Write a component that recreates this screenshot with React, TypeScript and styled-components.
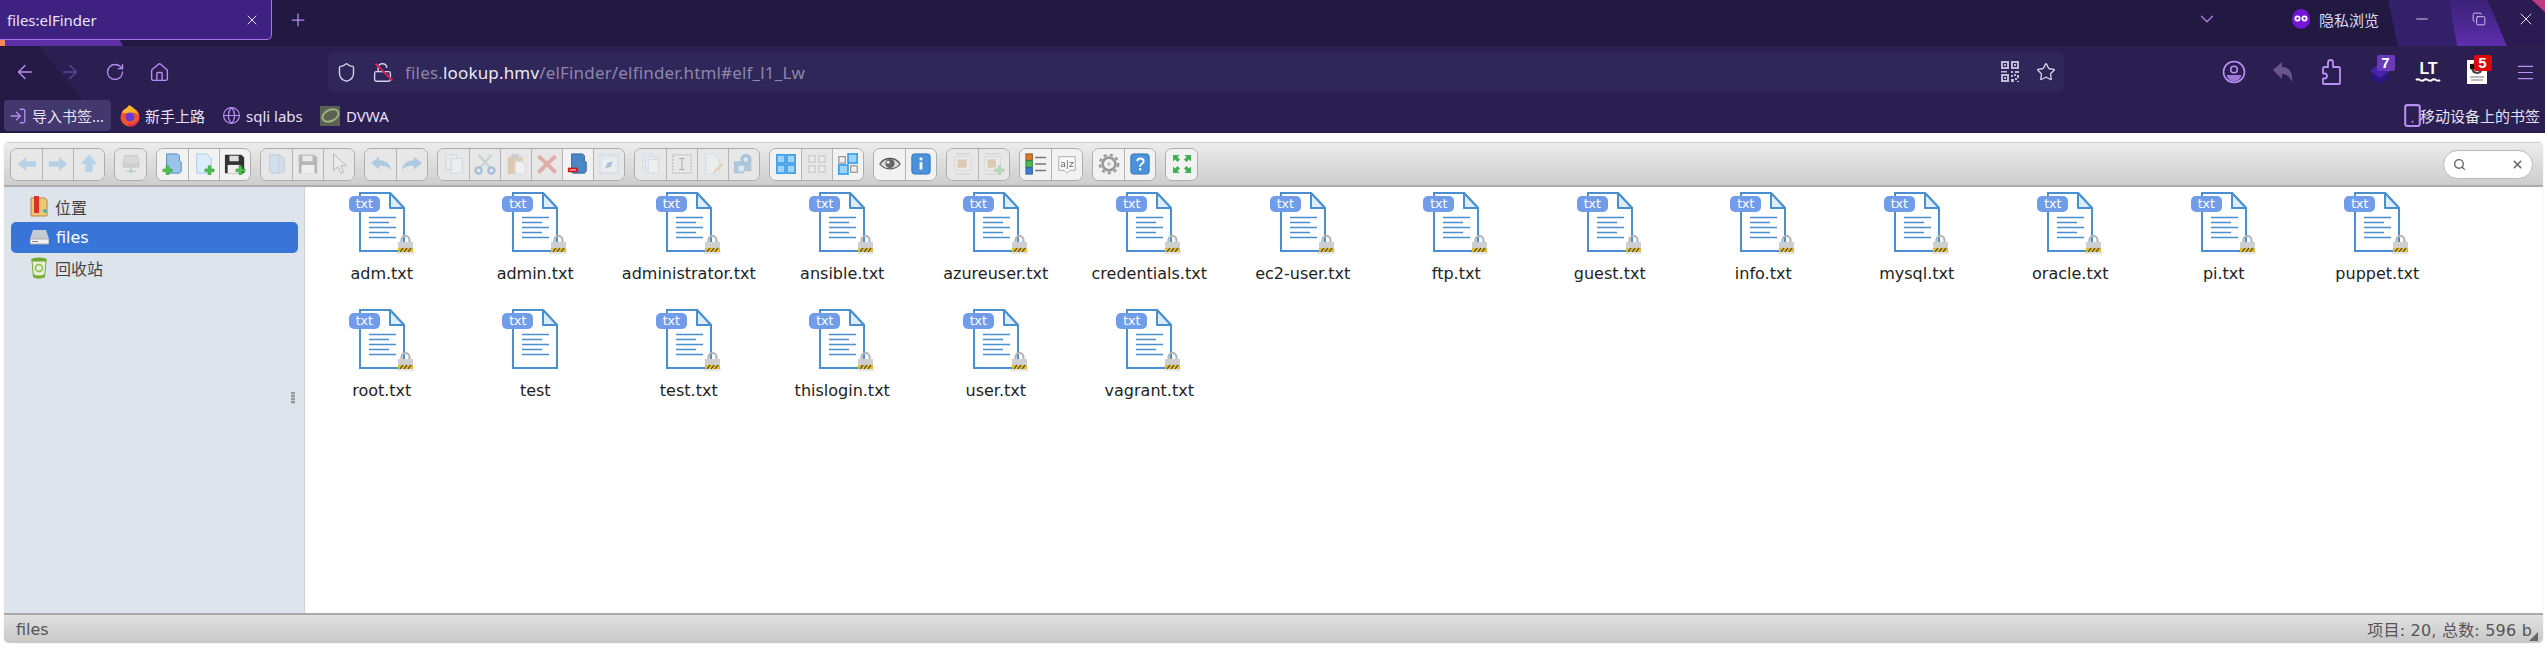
import React from "react";
import styled, { createGlobalStyle } from "styled-components";
import { ArrowLeft, ArrowRight, RotateCw, Home, Shield, Star, X, Plus, ChevronDown, Menu, Globe, Minus, Copy, LockOpen, Smartphone, LogIn, Search } from "lucide-react";

const CJK = `"Noto Sans", "Noto Sans CJK SC", sans-serif`;
const FM = `"DejaVu Sans", "Noto Sans CJK SC", sans-serif`;

const Global = createGlobalStyle`
  html, body { margin: 0; padding: 0; background: #fff; }
  #root { width: 2545px; height: 664px; overflow: hidden; }
`;

const Page = styled.div`width: 2545px; height: 664px; display: flex; flex-direction: column; background: #fff;`;
const Chrome = styled.header`
  position: relative; height: 133px; flex: none; background: #2a1f50; overflow: hidden; color: #e6e0f5; font-family: ${CJK};
`;
const Art = styled.svg`position: absolute; left: 0; top: 0; width: 2545px; height: 133px;`;
const TabRow = styled.div`position: relative; height: 46px; display: flex; align-items: flex-start;`;
const Tab = styled.div`
  width: 272px; height: 40px; box-sizing: border-box; background: #3e2180;
  border-right: 1px solid #a774ee; border-bottom: 1px solid #a774ee; border-bottom-right-radius: 5px;
  display: flex; align-items: center; justify-content: space-between; padding: 0 11px 0 7px; font-size: 15px; color: #e8e4f4;
`;
const NewTab = styled.div`width: 52px; height: 40px; display: flex; align-items: center; justify-content: center; color: #b48cf2;`;
const Grow = styled.div`flex: 1;`;
const Chevron = styled.div`width: 30px; height: 38px; display: flex; align-items: center; justify-content: center; color: #a67fe0; margin-right: 70px;`;
const Private = styled.div`display: flex; align-items: center; gap: 9px; font-size: 15px; height: 38px; color: #d9d9f5; width: 101px; white-space: nowrap;`;
const WinBtn = styled.div<{ $last?: boolean }>`
  width: ${(p) => (p.$last ? "38px" : "57px")}; height: 38px; display: flex; align-items: center; justify-content: center; color: #e6e0f5;
`;

const NavRow = styled.div`position: relative; height: 50px; display: flex; align-items: center; padding: 4px 0 2px 2px; box-sizing: border-box;`;
const NavBtn = styled.div<{ $dim?: boolean }>`
  position: relative; flex: none; width: 45px; height: 40px; display: flex; align-items: center; justify-content: center; color: ${(p) => (p.$dim ? "#5f4695" : "#b78ef2")};
`;
const UrlBar = styled.div`
  flex: none; width: 1736px; height: 40px; margin-left: 146px; background: #2f2659; border-radius: 5px; display: flex; align-items: center; color: #d8d2ea; font-size: 17px;
`;
const UrlIcon = styled.div`width: 36px; display: flex; justify-content: center; color: #d6d0ea;`;
const UrlText = styled.div`flex: 1; color: #8d86ab; letter-spacing: 0.17px; margin-left: 5px; white-space: nowrap;`;
const Host = styled.span`color: #ece8f6;`;
const SlashLock = styled.div`position: relative; display: flex;`;
const Strike = styled.div`position: absolute; left: 0; top: 9px; width: 24px; height: 2px; background: #d6244f; transform: rotate(45deg);`;
const RightIcons = styled.div`display: flex; flex: none; margin-left: 146px;`;
const ToolSlot = styled.div<{ $dim?: boolean }>`position: relative; width: 48.5px; height: 40px; display: flex; align-items: center; justify-content: center; color: #bb90f5;`;
const Pill = styled.div<{ $bg: string }>`
  position: absolute; left: 21px; top: 3px; min-width: 18px; height: 16px; border-radius: 2px; background: ${(p) => p.$bg};
  color: #fff; font: bold 15px/16px "Liberation Sans", sans-serif; text-align: center;
`;
const LtBox = styled.div`display: flex; flex-direction: column; align-items: center; color: #fff; font: bold 16px/15px "Liberation Sans", sans-serif; letter-spacing: -0.5px;`;
const BookRow = styled.div`position: relative; height: 37px; display: flex; align-items: center; padding: 2px 5px 0 4px; box-sizing: border-box; font-size: 15px; color: #e6e0f7;`;
const Book = styled.div<{ $active?: boolean; $w: number; $mobile?: boolean; $gapL?: number }>`
  flex: none; width: ${(p) => p.$w}px; height: 31px; border-radius: 4px; display: flex; align-items: center; gap: ${(p) => (p.$mobile ? 0 : 5)}px; padding-left: ${(p) => (p.$mobile ? 0 : 5)}px; box-sizing: border-box;
  margin-left: ${(p) => p.$gapL ?? 0}px;
  background: ${(p) => (p.$active ? "#43386e" : "transparent")}; white-space: nowrap; color: #b78ef2;
`;
const BookText = styled.span`color: #e6e0f7;`;
const PhoneBox = styled.div`flex: none; width: 15px; display: flex; justify-content: center; & > svg { flex: none; }`;
const DvwaIcon = styled.div`width: 20px; height: 20px; background: #5b6154; display: flex; align-items: center; justify-content: center; margin-right: 1px;`;
const Ring = styled.div`width: 15px; height: 9px; border: 2px solid #9db37e; border-radius: 50%; transform: rotate(-25deg);`;

const Finder = styled.main`
  margin: 9px 2px 0 4px; height: 501px; display: flex; flex-direction: column; font-family: ${FM}; border-radius: 5px; overflow: hidden; box-shadow: 0 0 1px #bbb;
`;
const Toolbar = styled.div`
  height: 45px; flex: none; box-sizing: border-box; border-top: 1px solid #cfcfcf; border-bottom: 2px solid #adadad; background: linear-gradient(#ececec, #cdcdcd);
  display: flex; align-items: center; padding: 0 10px 0 7px; gap: 11px;
`;
const Group = styled.div`display: flex; height: 31px; border: 1px solid #adadad; margin: 0 -1px; border-radius: 7px; overflow: hidden; background: #e6e6e6;`;
const Tool = styled.div<{ $on?: boolean }>`
  width: 31px; height: 31px; box-sizing: border-box; display: flex; align-items: center; justify-content: center; border-left: 1px solid #b4b4b4;
  background: ${(p) => (p.$on ? "#f2f2f2" : "#e7e7e7")};
  &:first-child { border-left: 0; }
  & > svg { opacity: ${(p) => (p.$on ? 1 : 0.33)}; filter: blur(0.3px); }
`;
const SearchBox = styled.div`
  margin-left: auto; width: 90px; height: 29px; border: 1px solid #b9b9b9; border-radius: 15px; background: #fff; display: flex; align-items: center; justify-content: space-between; padding: 0 8px 0 9px; color: #666; box-sizing: border-box;
`;
const Body = styled.div`flex: 1; display: flex; min-height: 0; background: #fff;`;
const Side = styled.nav`
  position: relative; width: 301px; flex: none; box-sizing: border-box; background: #dde4ec; border-right: 1px solid #ccd2da; padding: 4.5px 6px 0 7px;
`;
const SideItem = styled.div<{ $sel?: boolean }>`
  height: 30.5px; border-radius: 5px; display: flex; align-items: center; gap: 7px; padding-left: 19px; font-size: 16px;
  background: ${(p) => (p.$sel ? "#3875d7" : "transparent")}; color: ${(p) => (p.$sel ? "#fff" : "#444")};
`;
const Grip = styled.div`position: absolute; right: 9px; top: 205px; width: 4px; height: 12px; background: repeating-linear-gradient(#999 0 2px, #ccd 2px 3px);`;
const Cwd = styled.section`flex: 1; display: grid; grid-template-columns: repeat(14, 153.5px); grid-auto-rows: 117px; align-content: start; padding-top: 5px;`;
const Item = styled.div`display: flex; flex-direction: column; align-items: center;`;
const DocWrap = styled.div`position: relative; width: 46px; height: 60px;`;
const Badge = styled.div`
  position: absolute; left: -10px; top: 4px; width: 31px; height: 16px; background: #709ce9; border-radius: 5px; color: #fff; font-size: 12.5px; line-height: 15px; text-align: center;
`;
const LockPos = styled.div`position: absolute; left: 38px; top: 42px; display: flex;`;
const Name = styled.div`margin-top: 12px; font-size: 16px; line-height: 20px; color: #222; white-space: nowrap;`;
const Status = styled.footer`
  height: 30px; flex: none; box-sizing: border-box; border-top: 2px solid #aaa; background: linear-gradient(#e0e0e0, #c8c8c8); color: #555; font-size: 16px;
  display: flex; align-items: center; justify-content: space-between; padding: 0 8px 0 12px;
`;
const StatusRight = styled.div`position: relative; padding-right: 3px; letter-spacing: 0.2px;`;
const Resize = styled.svg`position: absolute; right: -3px; bottom: 0px;`;

const S = ({ children, size = 24 }: { children: React.ReactNode; size?: number }) => (
  <svg width={size} height={size} viewBox="0 0 24 24">{children}</svg>
);
const GPlus = ({ x = 16, y = 18 }: { x?: number; y?: number }) => (
  <path d={`M${x - 1.5} ${y - 5}h3v3.500h3.500v3h-3.500v3.500h-3v-3.500h-3.500v-3h3.500z`} fill="#4bc24f" stroke="#2f9a38" strokeWidth="0.6" />
);

const icons: Record<string, React.ReactNode> = {
  back: <path d="M2 12l9-8v5h11v6H11v5z" fill="#5aa7e6" />,
  forward: <path d="M22 12l-9-8v5H2v6h11v5z" fill="#5aa7e6" />,
  up: <path d="M12 2l9 10h-5v9H8v-9H3z" fill="#5aa7e6" />,
  net: <><path d="M5 3h14l2 9H3z" fill="#bbb" stroke="#888" /><rect x="3" y="12" width="18" height="4" fill="#999" /><path d="M12 16v4M6 20h12" stroke="#777" /><circle cx="12" cy="20" r="2" fill="#3bb54a" /></>,
  mkdir: <><path d="M5 1h12l2 2v5l2 2v10l-2 2H7l-2-1z" fill="#9cc3e8" stroke="#4d87c0" /><GPlus x={6} y={19} /></>,
  mkfile: <><path d="M4 1h11l5 5v16H4z" fill="#dcecfb" stroke="#a9c8e4" /><GPlus x={18} y={19} /></>,
  upload: <><path d="M1 2h18l3 3v17H1z" fill="#333" /><rect x="6" y="3" width="10" height="6" fill="#ddd" /><rect x="4" y="13" width="13" height="9" fill="#eee" /><GPlus x={18} y={19} /></>,
  open: <path d="M4 2h10l6 4v14l-6 2H6l-2-2zM14 2v20" fill="#a6cdee" stroke="#5b93c7" />,
  save: <><path d="M2 2h17l3 3v17H2z" fill="#555" /><rect x="6" y="3" width="11" height="6" fill="#eee" /><rect x="5" y="13" width="14" height="9" fill="#fff" /></>,
  select: <path d="M6 1v18l5-4 3 7 3-1-3-7h6z" fill="#eee" stroke="#555" />,
  undo: <path d="M1 11l9-7v4c8 0 12 4 13 11-3-4-7-5-13-5v4z" fill="#3d8ed8" />,
  redo: <path d="M23 11l-9-7v4C6 8 2 12 1 19c3-4 7-5 13-5v4z" fill="#3d8ed8" />,
  copy: <><rect x="3" y="2" width="12" height="16" fill="#e6f0fa" stroke="#8fb6d9" /><rect x="9" y="6" width="12" height="16" fill="#f3f8fd" stroke="#8fb6d9" /></>,
  cut: <><path d="M5 2l13 15M19 2L6 17" stroke="#8aa" strokeWidth="2.500" /><circle cx="5" cy="19" r="3.400" fill="none" stroke="#1e6fc0" strokeWidth="2.400" /><circle cx="19" cy="19" r="3.400" fill="none" stroke="#1e6fc0" strokeWidth="2.400" /></>,
  paste: <><rect x="3" y="4" width="16" height="19" rx="1" fill="#c98b45" /><rect x="7" y="1" width="8" height="5" fill="#999" /><path d="M11 9h7l4 4v10H11z" fill="#fff" stroke="#bbb" /></>,
  rm: <path d="M4 2l8 7 8-7 3 3-8 7 8 8-3 3-8-8-8 8-3-3 8-8-8-7z" fill="#d23a2e" />,
  purge: <><path d="M5 1h12l2 2v5l2 2v10l-2 2H7l-2-1z" fill="#4d86c4" stroke="#2d659f" /><rect x="1" y="16" width="11" height="5" fill="#d8141a" /><rect x="3" y="18" width="7" height="1" fill="#fff" /></>,
  empty: <><rect x="2" y="2" width="20" height="20" fill="#d4e6f6" stroke="#9fc0dd" /><rect x="4" y="6" width="16" height="14" fill="#f1f7fc" /><path d="M16 9l-2 6-6 2 2-6z" fill="#2f6fc0" /></>,
  dup: <><rect x="3" y="1" width="11" height="15" fill="#e6f0fa" stroke="#9fc0dd" /><rect x="6" y="4" width="11" height="15" fill="#eef5fb" stroke="#9fc0dd" /><rect x="9" y="7" width="11" height="15" fill="#f8fbfe" stroke="#9fc0dd" /></>,
  rename: <><rect x="2" y="2" width="20" height="20" fill="none" stroke="#333" strokeDasharray="2 1.500" /><path d="M9 6h6M9 18h6M12 6v12" stroke="#333" /></>,
  edit: <><path d="M4 1h10l5 5v17H4z" fill="#eef4fa" stroke="#a5c0d8" /><path d="M12 21l9-10 2 2-9 9z" fill="#e2a12c" /></>,
  archive: <><path d="M1 9h11v13H1zM12 6h8v14h-8z" fill="#3f87c8" /><circle cx="14" cy="7" r="6" fill="#2d7ac2" /><circle cx="14" cy="7" r="2.500" fill="#cfe4f5" /><rect x="6" y="14" width="6" height="6" fill="#cfe4f5" /></>,
  icons: <>{[[2, 2], [13, 2], [2, 13], [13, 13]].map(([x, y]) => <rect key={x * 100 + y} x={x} y={y} width="9" height="9" fill="#9fd2f7" stroke="#2b97e8" strokeWidth="1.600" />)}</>,
  grid: <>{[[3, 3], [14, 3], [3, 14], [14, 14]].map(([x, y]) => <rect key={x * 100 + y} x={x} y={y} width="7" height="7" fill="#eee" stroke="#888" strokeWidth="1.200" />)}</>,
  mixed: <><rect x="2" y="4" width="7" height="7" fill="#eee" stroke="#777" /><rect x="12" y="1" width="10" height="10" fill="#9fd2f7" stroke="#2b97e8" strokeWidth="1.600" /><rect x="2" y="13" width="10" height="10" fill="#9fd2f7" stroke="#2b97e8" strokeWidth="1.600" /><rect x="15" y="14" width="7" height="7" fill="#eee" stroke="#777" /></>,
  eye: <><path d="M1 12c5-8 17-8 22 0-5 7-17 7-22 0z" fill="#ddd" stroke="#555" strokeWidth="1.400" /><circle cx="12" cy="11.500" r="5" fill="#666" /><circle cx="10" cy="10" r="1.600" fill="#eee" /></>,
  info: <><rect x="2" y="1" width="20" height="22" rx="3" fill="#4a92dc" stroke="#2e70b6" /><rect x="10.500" y="5" width="3" height="3" fill="#fff" /><rect x="10.500" y="10" width="3" height="8" fill="#fff" /></>,
  resize: <><path d="M4 1h16M4 23h16" stroke="#999" /><rect x="3" y="4" width="18" height="15" fill="#eee" stroke="#bbb" /><rect x="6" y="7" width="10" height="9" fill="#c98b45" /></>,
  extract: <><path d="M2 1h16M2 23h12" stroke="#999" /><rect x="2" y="4" width="17" height="15" fill="#eee" stroke="#bbb" /><rect x="5" y="7" width="9" height="9" fill="#c98b45" /><GPlus x={18} y={19} /></>,
  sort: <><rect x="1" y="1" width="7" height="7" fill="#d77c2a" stroke="#8c4f17" /><rect x="1" y="8.500" width="7" height="7" fill="#4fbb55" stroke="#2b8433" /><rect x="1" y="16" width="7" height="7" fill="#3c7fd0" stroke="#265a98" /><path d="M11 5h12M11 12h12M11 19h12" stroke="#777" strokeWidth="1.600" /></>,
  az: <><path d="M3 4h18v15h-6l-3 3-3-3H3z" fill="#f8f8f8" stroke="#aaa" /><text x="12" y="15" textAnchor="middle" fontSize="10" fontFamily="DejaVu Sans" fill="#666">a|z</text></>,
  gear: <><circle cx="12" cy="12" r="7" fill="none" stroke="#999" strokeWidth="3" /><circle cx="12" cy="12" r="10" fill="none" stroke="#999" strokeWidth="2.600" strokeDasharray="3.400 3.400" /><circle cx="12" cy="12" r="2" fill="#bbb" /></>,
  help: <><rect x="2" y="1" width="20" height="22" rx="3" fill="#4a92dc" stroke="#2e70b6" /><path d="M9 9c0-4 7-4 7 0 0 3-4 2.500-4 6" fill="none" stroke="#fff" strokeWidth="2" /><rect x="11" y="16.500" width="2.400" height="2.400" fill="#fff" /></>,
  full: <>{[0, 90, 180, 270].map((r) => <path key={r} d="M3 3h6.500l-2 2 2.500 2.500-2.500 2.500L5 7.500l-2 2z" fill="#45b04e" transform={`rotate(${r} 12 12)`} />)}</>,
};

type T = [string, boolean?];
const groups: T[][] = [
  [["back"], ["forward"], ["up"]],
  [["net"]],
  [["mkdir", true], ["mkfile", true], ["upload", true]],
  [["open"], ["save"], ["select"]],
  [["undo"], ["redo"]],
  [["copy"], ["cut"], ["paste"], ["rm"], ["purge", true], ["empty"]],
  [["dup"], ["rename"], ["edit"], ["archive"]],
  [["icons", true], ["grid"], ["mixed", true]],
  [["eye", true], ["info", true]],
  [["resize"], ["extract"]],
  [["sort", true], ["az", true]],
  [["gear", true], ["help", true]],
  [["full", true]],
];

const files = ["adm.txt", "admin.txt", "administrator.txt", "ansible.txt", "azureuser.txt", "credentials.txt", "ec2-user.txt", "ftp.txt", "guest.txt", "info.txt", "mysql.txt", "oracle.txt", "pi.txt", "puppet.txt", "root.txt", "test", "test.txt", "thislogin.txt", "user.txt", "vagrant.txt"];

const DocIcon = () => (
  <svg width="46" height="60" viewBox="0 0 46 60">
    <path d="M1 1h30l14 15v43H1z" fill="#fff" stroke="#4a8fd0" strokeWidth="2" />
    <path d="M31 1l14 15H31z" fill="#dcedfb" stroke="#4a8fd0" strokeWidth="2" strokeLinejoin="round" />
    <path d="M10 25.500h27M10 30.500h20M10 35.500h27M10 40.500h20M10 45.500h27" stroke="#4a8fd0" strokeWidth="1.500" />
  </svg>
);
const LockIcon = () => (
  <svg width="17" height="20" viewBox="0 0 17 20">
    <path d="M4.500 9V6a4 4 0 0 1 8 0v3" fill="none" stroke="#b5b5b5" strokeWidth="2.200" />
    <rect x="1" y="8" width="15" height="11" fill="#cfcfcf" />
    <rect x="1" y="14" width="15" height="4" fill="#e0bb30" />
    <path d="M3 18l3-4M7 18l3-4M11 18l3-4" stroke="#444" strokeWidth="1.200" />
    <rect x="0" y="18" width="17" height="2" fill="#e4e4e4" />
  </svg>
);
const FileItem = ({ name }: { name: string }) => (
  <Item>
    <DocWrap>
      <DocIcon />
      <Badge>txt</Badge>
      {name !== "test" && <LockPos><LockIcon /></LockPos>}
    </DocWrap>
    <Name>{name}</Name>
  </Item>
);

const PlacesIcon = () => (
  <svg width="18" height="22" viewBox="0 0 18 22">
    <path d="M1 2h14l2 2v16H1z" fill="#edc878" stroke="#b58b3a" />
    <rect x="4" y="0" width="5" height="17" fill="#d8322a" />
    <circle cx="15" cy="15" r="2" fill="#5aa" />
  </svg>
);
const DriveIcon = () => (
  <svg width="19" height="16" viewBox="0 0 19 16">
    <path d="M3 1h13l3 9H0z" fill="#c4cbd4" />
    <rect x="0" y="10" width="19" height="5" rx="1" fill="#f2f2f2" stroke="#aaa" />
    <rect x="2" y="12" width="6" height="1" fill="#888" />
  </svg>
);
const TrashIcon = () => (
  <svg width="18" height="22" viewBox="0 0 18 22">
    <ellipse cx="9" cy="3" rx="8" ry="2.500" fill="#6fa82a" />
    <path d="M2 4h14l-1.500 16c-3 1.500-8 1.500-11 0z" fill="#e7efd8" stroke="#78ad2f" />
    <path d="M3 17c4 2 8 2 12 0l-.5 3c-3 1.500-8 1.500-11 0z" fill="#78ad2f" />
    <circle cx="9" cy="11" r="3.500" fill="none" stroke="#8cbb4a" strokeWidth="1.500" />
  </svg>
);
const FoxIcon = () => (
  <svg width="20" height="22" viewBox="0 0 20 22">
    <circle cx="10" cy="12" r="9.500" fill="#f0562a" />
    <path d="M2 8C3 4 8 3 9 0c4 2 8 6 10 10-3-3-6-3-8-2z" fill="#ffb52e" />
    <circle cx="10" cy="12" r="4.500" fill="#6b3bd1" />
    <path d="M5 16c4 5 9 4 13-1-1 5-4 7-8 6.500z" fill="#e3264f" />
  </svg>
);
const QrIcon = () => (
  <svg width="18" height="22" viewBox="0 0 18 22" fill="#bfb9d6">
    <path d="M0 0h8v8H0zM2 2v4h4V2zM10 0h8v8h-8zM12 2v4h4V2zM0 13h8v8H0zM2 15v4h4v-4zM3 3h2v2H3zM13 3h2v2h-2zM3 16h2v2H3z" fillRule="evenodd" />
    <path d="M10 10h2v2h-2zM14 10h4v2h-4zM10 14h2v2h-2zM13 13h2v2h-2zM16 14h2v3h-2zM10 18h3v3h-3zM14 17h2v2h-2zM16 20h2v1h-2zM0 10h6v1.500H0z" />
  </svg>
);
const StackIcon = () => (
  <svg width="24" height="24" viewBox="0 0 24 24">
    <path d="M12 10l10 8-10 6-10-6z" fill="#2d1680" />
    <path d="M12 3l10 8-10 7-10-7z" fill="#4a22b0" />
  </svg>
);
const Wave = () => (
  <svg width="26" height="7" viewBox="0 0 26 7" fill="none" stroke="#fff" strokeWidth="2">
    <path d="M1 4c3-3 5 3 8 0s5 3 8 0 5 3 8 0" />
  </svg>
);
const PicIcon = () => (
  <svg width="20" height="24" viewBox="0 0 20 24">
    <rect width="20" height="24" fill="#fff" />
    <circle cx="10" cy="8" r="6" fill="#444" />
    <circle cx="10" cy="9" r="3" fill="#ddd" />
    <rect x="3" y="4" width="4" height="5" fill="#111" />
    <rect x="13" y="4" width="4" height="5" fill="#111" />
    <path d="M3 17h14M4 20h12" stroke="#777" />
  </svg>
);
const Mask = () => (
  <svg width="18" height="20" viewBox="0 0 18 20">
    <ellipse cx="9" cy="10" rx="9" ry="10" fill="#7416d8" />
    <circle cx="5.500" cy="9.500" r="3" fill="#fff" />
    <circle cx="12.500" cy="9.500" r="3" fill="#fff" />
    <circle cx="5.500" cy="9.500" r="1.200" fill="#7416d8" />
    <circle cx="12.500" cy="9.500" r="1.200" fill="#7416d8" />
  </svg>
);
const Account = () => (
  <svg width="24" height="24" viewBox="0 0 24 24" fill="none" stroke="currentColor" strokeWidth="1.600">
    <circle cx="12" cy="12" r="10.500" />
    <circle cx="12" cy="9.500" r="3.300" />
    <path d="M4.500 15h15c-1 4-4 6.500-7.500 6.500S5.500 19 4.500 15z" fill="currentColor" stroke="none" opacity="0.8" />
  </svg>
);
const DimUndo = () => (
  <svg width="22" height="24" viewBox="0 0 22 24">
    <path d="M1 10l9-8v5c7 0 11 5 10 15-2-5-5-8-10-8v5z" fill="#6a5490" />
  </svg>
);
const PuzzleIcon = () => (
  <svg width="20" height="26" viewBox="0 0 20 26" fill="none" stroke="currentColor" strokeWidth="1.800" strokeLinejoin="round">
    <path d="M7 8V3.500C7 2 8 1 9.500 1S12 2 12 3.500V8h5.500a1.500 1.500 0 0 1 1.500 1.500V24a1 1 0 0 1-1 1H3a1 1 0 0 1-1-1v-4.500h1.500a2.500 2.500 0 0 0 0-5H2V9.500A1.500 1.500 0 0 1 3.500 8z" />
  </svg>
);

export default function App() {
  return (
    <Page>
      <Global />
      <Chrome>
        <Art viewBox="0 0 2545 133" aria-hidden="true">
          <defs>
            <linearGradient id="band" x1="0" y1="0" x2="0" y2="1">
              <stop offset="0" stopColor="#3a2178" />
              <stop offset="1" stopColor="#5e2fac" />
            </linearGradient>
          </defs>
          <rect x="0" y="0" width="2545" height="46" fill="#221942" />
          <path d="M0 0L110 133H0z" fill="#241a45" />
          <path d="M0 40h120l3 6H0z" fill="#5d30a8" />
          <path d="M0 40h5v6H0z" fill="#f08a5d" />
          <path d="M2388 0h61l8 46h-59z" fill="#33206a" />
          <path d="M2449 0h39l19 46h-50z" fill="url(#band)" />
          <path d="M2488 0h57v46h-38z" fill="#2a1b52" />
          <path d="M2532 0h13v12z" fill="#c03a80" />
        </Art>
        <TabRow>
          <Tab>
            files:elFinder
            <X size={16} strokeWidth={1.5} />
          </Tab>
          <NewTab><Plus size={20} strokeWidth={1.5} /></NewTab>
          <Grow />
          <Chevron><ChevronDown size={22} strokeWidth={1.5} /></Chevron>
          <Private><Mask />隐私浏览</Private>
          <WinBtn><Minus size={18} strokeWidth={1.2} /></WinBtn>
          <WinBtn><Copy size={14} strokeWidth={1.4} /></WinBtn>
          <WinBtn $last><X size={20} strokeWidth={1.2} /></WinBtn>
        </TabRow>
        <NavRow>
          <NavBtn><ArrowLeft size={22} strokeWidth={1.6} /></NavBtn>
          <NavBtn $dim><ArrowRight size={22} strokeWidth={1.6} /></NavBtn>
          <NavBtn><RotateCw size={20} strokeWidth={1.6} /></NavBtn>
          <NavBtn><Home size={21} strokeWidth={1.6} /></NavBtn>
          <UrlBar>
            <UrlIcon><Shield size={21} strokeWidth={1.6} /></UrlIcon>
            <UrlIcon>
              <SlashLock>
                <LockOpen size={21} strokeWidth={1.6} />
                <Strike />
              </SlashLock>
            </UrlIcon>
            <UrlText>files.<Host>lookup.hmv</Host>/elFinder/elfinder.html#elf_l1_Lw</UrlText>
            <UrlIcon><QrIcon /></UrlIcon>
            <UrlIcon><Star size={20} strokeWidth={1.6} /></UrlIcon>
          </UrlBar>
          <RightIcons>
            <ToolSlot><Account /></ToolSlot>
            <ToolSlot><DimUndo /></ToolSlot>
            <ToolSlot><PuzzleIcon /></ToolSlot>
            <ToolSlot><StackIcon /><Pill $bg="#6a3ab8">7</Pill></ToolSlot>
            <ToolSlot><LtBox>LT<Wave /></LtBox></ToolSlot>
            <ToolSlot><PicIcon /><Pill $bg="#d80a0a">5</Pill></ToolSlot>
            <ToolSlot><Menu size={21} strokeWidth={1.4} /></ToolSlot>
          </RightIcons>
        </NavRow>
        <BookRow>
          <Book $active $w={107}><LogIn size={18} strokeWidth={1.7} /><BookText>导入书签...</BookText></Book>
          <Book $w={102} $gapL={4}><FoxIcon /><BookText>新手上路</BookText></Book>
          <Book $w={98}><Globe size={19} strokeWidth={1.5} /><BookText>sqli labs</BookText></Book>
          <Book $w={90}><DvwaIcon><Ring /></DvwaIcon><BookText>DVWA</BookText></Book>
          <Grow />
          <Book $mobile $w={135}><PhoneBox><Smartphone size={25} strokeWidth={2} /></PhoneBox><BookText>移动设备上的书签</BookText></Book>
        </BookRow>
      </Chrome>
      <Finder>
        <Toolbar>
          {groups.map((g, i) => (
            <Group key={i}>
              {g.map(([k, on]) => (
                <Tool key={k} $on={on}><S size={k === "full" ? 24 : 22}>{icons[k]}</S></Tool>
              ))}
            </Group>
          ))}
          <SearchBox><Search size={13} strokeWidth={2.5} /><X size={13} strokeWidth={3} /></SearchBox>
        </Toolbar>
        <Body>
          <Side>
            <SideItem><PlacesIcon />位置</SideItem>
            <SideItem $sel><DriveIcon />files</SideItem>
            <SideItem><TrashIcon />回收站</SideItem>
            <Grip />
          </Side>
          <Cwd>{files.map((f) => <FileItem key={f} name={f} />)}</Cwd>
        </Body>
        <Status>
          files
          <StatusRight>
            项目: 20, 总数: 596 b
            <Resize width="10" height="10" viewBox="0 0 10 10"><path d="M10 1v9H1zM10 5v5H5z" fill="#666" /></Resize>
          </StatusRight>
        </Status>
      </Finder>
    </Page>
  );
}
